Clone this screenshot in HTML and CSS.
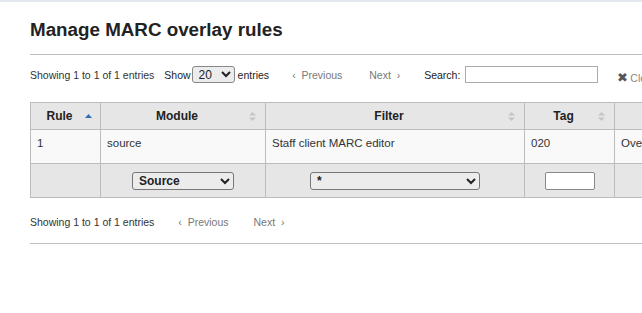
FILE: index.html
```
<!DOCTYPE html>
<html>
	<head>
		<link rel="stylesheet" href="styles.css">
	</head>
	<body>
		<div class="main">
			<h1>Manage MARC overlay rules</h1>
			<div class="toolbar">
				<span class="info">Showing 1 to 1 of 1 entries</span>
				<label class="length">Show
					<select class="small-select">
						<option>20</option>
					</select>
					entries
				</label>
				<span class="pager">
					<a class="prev">&lsaquo;&nbsp; Previous</a>
					<a class="next">Next &nbsp;&rsaquo;</a>
				</span>
				<label class="search">Search:
					<input type="text"/>
				</label>
				<a class="clear"><span class="x">&#10006;</span>Clear filter</a>
			</div>
			<table class="rules">
				<thead>
					<tr>
						<th class="c-rule sort-asc">Rule</th>
						<th class="c-module sortable">Module</th>
						<th class="c-filter sortable">Filter</th>
						<th class="c-tag sortable">Tag</th>
						<th class="c-preset sortable">Preset</th>
					</tr>
				</thead>
				<tbody>
					<tr>
						<td>1</td>
						<td>source</td>
						<td>Staff client MARC editor</td>
						<td>020</td>
						<td>Overwrite</td>
					</tr>
				</tbody>
				<tfoot>
					<tr>
						<td></td>
						<td class="center">
							<select class="module-select">
								<option>Source</option>
							</select>
						</td>
						<td class="center">
							<select class="filter-select">
								<option>*</option>
							</select>
						</td>
						<td class="center">
							<input class="tag-input" type="text"/>
						</td>
						<td></td>
					</tr>
				</tfoot>
			</table>
			<div class="toolbar bottom">
				<span class="info">Showing 1 to 1 of 1 entries</span>
				<span class="pager">
					<a class="prev">&lsaquo;&nbsp; Previous</a>
					<a class="next">Next &nbsp;&rsaquo;</a>
				</span>
			</div>
		</div>
	</body>
</html>
```

FILE: styles.css
```
*{
	margin: 0;
	padding: 0;
	box-sizing: border-box;
}
html,body{
	height: 100%;
	width: 100%;
	overflow: hidden;
}
body{
	border-top: 2px solid #e3e9ef;
	font-family: "Liberation Sans", Arial, sans-serif;
	font-size: 12px;
	color: #333;
	background: #fff;
}
.main{
	width: 900px;
	padding-left: 30px;
}
h1{
	font-size: 18.8px;
	font-weight: bold;
	color: #222;
	margin-top: 17px;
	padding-bottom: 13px;
	border-bottom: 1px solid #bdbdbd;
}
.toolbar{
	display: flex;
	align-items: center;
	height: 39px;
	white-space: nowrap;
	font-size: 10.5px;
}
.toolbar.bottom{
	margin-top: 4px;
	height: 42px;
	border-bottom: 1px solid #bdbdbd;
	align-items: flex-start;
	padding-top: 14px;
}
.length{
	display: flex;
	align-items: center;
	color: #222;
	margin-left: 10px;
}
.small-select{
	width: 43px;
	height: 17px;
	margin: 0 3px 0 1px;
	font-family: "Liberation Sans", Arial, sans-serif;
	font-size: 12px;
	border: 1px solid #888;
	border-radius: 3px;
	background: #ececec;
	padding-left: 2px;
	color: #222;
}
.pager{
	margin-left: 23px;
}
.bottom .pager{
	margin-left: 24px;
}
.pager a{
	color: #777;
	margin-right: 24px;
}
.bottom .pager a{
	margin-right: 22px;
}
.search{
	display: flex;
	align-items: center;
	color: #222;
}
.search input{
	width: 133px;
	height: 17px;
	margin-left: 5px;
	border: 1px solid #aaa;
}
.clear{
	margin-left: 19px;
	margin-top: 5px;
	color: #888;
}
.clear .x{
	color: #555;
	font-size: 13px;
	margin-right: 2px;
}
.rules{
	border-collapse: collapse;
	margin-top: 8px;
	table-layout: fixed;
	width: 760px;
}
.rules th, .rules td{
	border: 1px solid #bcbcbc;
	padding: 0 6px;
	text-align: left;
	vertical-align: top;
	font-size: 11.5px;
}
.rules th{
	background: #e6e6e6;
	height: 27px;
	padding: 0 18px 0 6px;
	text-align: center;
	vertical-align: middle;
	font-size: 12px;
	color: #222;
	position: relative;
}
.rules tbody td{
	background: #f9f9f9;
	height: 34px;
	padding-top: 7px;
}
.rules tfoot td{
	background: #e6e6e6;
	height: 34px;
	vertical-align: middle;
}
.center{
	text-align: center !important;
}
.c-rule{
	width: 70px;
}
.c-module{
	width: 165px;
}
.c-filter{
	width: 259px;
}
.c-tag{
	width: 90px;
}
.sortable::after, .sort-asc::after{
	content: "";
	position: absolute;
	right: 9px;
	top: 9px;
	width: 7px;
	height: 9px;
	background: #c4c4c4;
	clip-path: path("M3.5 0 L7 3.5 L0 3.5 Z M0 5.5 L7 5.5 L3.5 9 Z");
}
.sort-asc::after{
	right: 8px;
	top: 11px;
	height: 4px;
	background: #2f6fb8;
	clip-path: polygon(50% 0, 100% 100%, 0 100%);
}
select.module-select, select.filter-select{
	height: 18px;
	font-family: "Liberation Sans", Arial, sans-serif;
	font-size: 12px;
	font-weight: bold;
	color: #222;
	border: 1px solid #777;
	border-radius: 3px;
	background: #ececec;
	padding-left: 2px;
}
.module-select{
	width: 102px;
}
.filter-select{
	width: 170px;
}
.tag-input{
	width: 50px;
	height: 18px;
	border: 1px solid #888;
	border-radius: 2px;
	background: #fff;
}
```
